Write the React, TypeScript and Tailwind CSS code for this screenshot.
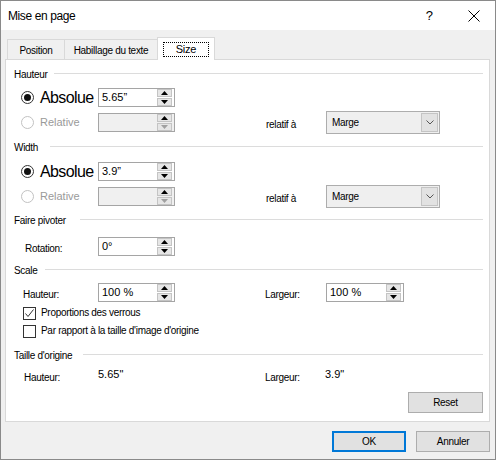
import React from "react";

const label = "text-[10px] tracking-[-0.3px] leading-none text-black";

function Arrow({ up, dim }: { up?: boolean; dim?: boolean }) {
  return (
    <svg width="7" height="4" viewBox="0 0 7 4" className="block">
      <polygon points={up ? "3.5,0 7,4 0,4" : "0,0 7,0 3.5,4"} fill={dim ? "#a0a0a0" : "#000"} />
    </svg>
  );
}

function Spin({ value, disabled, w = "w-[77px]" }: { value?: string; disabled?: boolean; w?: string }) {
  return (
    <div
      className={`flex h-[19px] ${w} items-center border border-[#a5a5a5] ${
        disabled ? "bg-[#f0f0f0]" : "bg-white"
      }`}
    >
      <span className="flex-1 pl-[3px] text-[11px] leading-none">{value}</span>
      <div className="mr-[2px] flex flex-col gap-px">
        <div className="flex h-[8px] w-[15px] items-center justify-center border border-[#c4c4c4] bg-[#e6e6e6]">
          <Arrow up />
        </div>
        <div className="flex h-[8px] w-[15px] items-center justify-center border border-[#c4c4c4] bg-[#e6e6e6]">
          <Arrow dim={disabled} />
        </div>
      </div>
    </div>
  );
}

function Radio({ on, disabled }: { on?: boolean; disabled?: boolean }) {
  return (
    <div
      className={`flex h-[13px] w-[13px] items-center justify-center rounded-full border bg-white ${
        disabled ? "border-[#c2c2c2]" : "border-[#333]"
      }`}
    >
      {on && <div className="h-[7px] w-[7px] rounded-full bg-[#111]" />}
    </div>
  );
}

function Check({ on }: { on?: boolean }) {
  return (
    <div className="flex h-[13px] w-[13px] items-center justify-center border border-[#333] bg-white">
      {on && (
        <svg width="11" height="11" viewBox="0 0 11 11">
          <polyline points="1.5,5.5 4,8.5 9.5,1.5" fill="none" stroke="#333" strokeWidth="1" />
        </svg>
      )}
    </div>
  );
}

function Combo() {
  return (
    <div className="flex h-[23px] w-[114px] items-center border border-[#adadad] bg-[#efefef] p-px">
      <span className={`${label} flex-1 pl-[4px]`}>Marge</span>
      <div className="flex h-full w-[17px] items-center justify-center border border-[#c4c4c4] bg-[#e2e2e2]">
        <svg width="8" height="5" viewBox="0 0 8 5">
          <polyline points="0.5,0.5 4,4 7.5,0.5" fill="none" stroke="#555" strokeWidth="1" />
        </svg>
      </div>
    </div>
  );
}

function Section({ title, w, className }: { title: string; w: string; className: string }) {
  return (
    <div className={`flex h-[14px] items-center pl-[8px] pr-[6px] ${className}`}>
      <span className={`${label} ${w}`}>{title}</span>
      <div className="mb-[3px] h-px flex-1 bg-[#dcdcdc]" />
    </div>
  );
}

function AbsRow({ value, className }: { value: string; className: string }) {
  return (
    <div className={`flex h-[19px] items-center ${className}`}>
      <div className="flex w-[92px] items-center pl-[15px]">
        <Radio on />
        <span className="ml-[6px] text-[16px] leading-none tracking-[-0.6px]">Absolue</span>
      </div>
      <Spin value={value} />
    </div>
  );
}

function RelRow({ className }: { className: string }) {
  return (
    <div className={`flex h-[19px] items-center ${className}`}>
      <div className="flex w-[92px] items-center pl-[15px]">
        <Radio disabled />
        <span className="ml-[6px] text-[11px] leading-none text-[#9a9a9a]">Relative</span>
      </div>
      <Spin disabled />
      <div className="w-[151px] pl-[91px]">
        <span className={label}>relatif à</span>
      </div>
      <Combo />
    </div>
  );
}

function Btn({ children, primary, w = "w-[74px]" }: { children: React.ReactNode; primary?: boolean; w?: string }) {
  return (
    <div
      className={`flex h-[21px] ${w} items-center justify-center bg-[#e1e1e1] ${
        primary ? "border-2 border-[#0078d7]" : "border border-[#adadad]"
      }`}
    >
      <span className={label}>{children}</span>
    </div>
  );
}

export default function App() {
  return (
    <div className="flex h-[460px] w-[496px] flex-col border border-[#8a8a8a] bg-[#f0f0f0] font-['Liberation_Sans',Arial,sans-serif] text-black">
      {/* title bar */}
      <div className="flex h-[29px] items-center bg-white">
        <span className="pl-[7px] text-[12px] tracking-[-0.4px]">Mise en page</span>
        <div className="flex-1" />
        <span className="mr-[35px] text-[13px] leading-none">?</span>
        <svg width="12" height="12" viewBox="0 0 12 12" className="mr-[15px]">
          <path d="M0.5 0.5L11.5 11.5M11.5 0.5L0.5 11.5" stroke="#000" strokeWidth="1" />
        </svg>
      </div>

      {/* tabs */}
      <div className="mt-[7px] ml-[6px] flex h-[22px] items-end">
        <div className="flex h-[20px] w-[58px] items-center justify-center border border-b-0 border-[#d9d9d9] pt-[3px]">
          <span className={label}>Position</span>
        </div>
        <div className="flex h-[20px] w-[93px] items-center justify-center border-t border-r border-[#d9d9d9] pt-[3px]">
          <span className={label}>Habillage du texte</span>
        </div>
        <div className="relative z-10 -mb-px -ml-px flex h-[23px] w-[58px] items-center justify-center border border-b-0 border-[#d9d9d9] bg-white">
          <div className="flex h-[15px] w-[46px] items-center justify-center border border-dotted border-black">
            <span className="text-[11px] leading-none tracking-[-0.2px]">Size</span>
          </div>
        </div>
      </div>

      {/* tab page */}
      <div className="ml-[4px] mr-[5px] flex h-[363px] flex-col border border-[#d9d9d9] bg-white">
        <Section title="Hauteur" w="w-[40px]" className="mt-[8px]" />
        <AbsRow value={"5.65\u201d"} className="mt-[6px]" />
        <RelRow className="mt-[6px]" />

        <Section title="Width" w="w-[36px]" className="mt-[9px]" />
        <AbsRow value={"3.9\u201d"} className="mt-[7px]" />
        <RelRow className="mt-[6px]" />

        <Section title="Faire pivoter" w="w-[66px]" className="mt-[8px]" />
        <div className="mt-[9px] flex h-[19px] items-center">
          <div className="w-[92px] pl-[19px]">
            <span className={label}>Rotation:</span>
          </div>
          <Spin value={"0\u00b0"} />
        </div>

        <Section title="Scale" w="w-[31px]" className="mt-[8px]" />
        <div className="mt-[5px] flex h-[19px] items-center">
          <div className="w-[92px] pl-[17px]">
            <span className={label}>Hauteur:</span>
          </div>
          <Spin value="100 %" />
          <div className="w-[151px] pl-[90px]">
            <span className={label}>Largeur:</span>
          </div>
          <Spin value="100 %" w="w-[78px]" />
        </div>
        <div className="mt-[4px] flex h-[14px] items-center pl-[17px]">
          <Check on />
          <span className={`${label} ml-[5px]`}>Proportions des verrous</span>
        </div>
        <div className="mt-[4px] flex h-[14px] items-center pl-[17px]">
          <Check />
          <span className={`${label} ml-[5px]`}>Par rapport à la taille d'image d'origine</span>
        </div>

        <Section title="Taille d'origine" w="w-[69px]" className="mt-[11px]" />
        <div className="mt-[6px] flex h-[14px] items-center">
          <div className="w-[92px] pl-[18px]">
            <span className={label}>Hauteur:</span>
          </div>
          <span className="-mt-[3px] w-[167px] text-[11px] leading-none">5.65"</span>
          <div className="w-[60px]">
            <span className={label}>Largeur:</span>
          </div>
          <span className="-mt-[3px] text-[11px] leading-none">3.9"</span>
        </div>

        <div className="mt-[9px] flex justify-end pr-[6px]">
          <Btn w="w-[75px]">Reset</Btn>
        </div>
      </div>

      {/* dialog buttons */}
      <div className="mt-[9px] mr-[5px] flex justify-end gap-[10px]">
        <Btn primary>OK</Btn>
        <Btn>Annuler</Btn>
      </div>
    </div>
  );
}
